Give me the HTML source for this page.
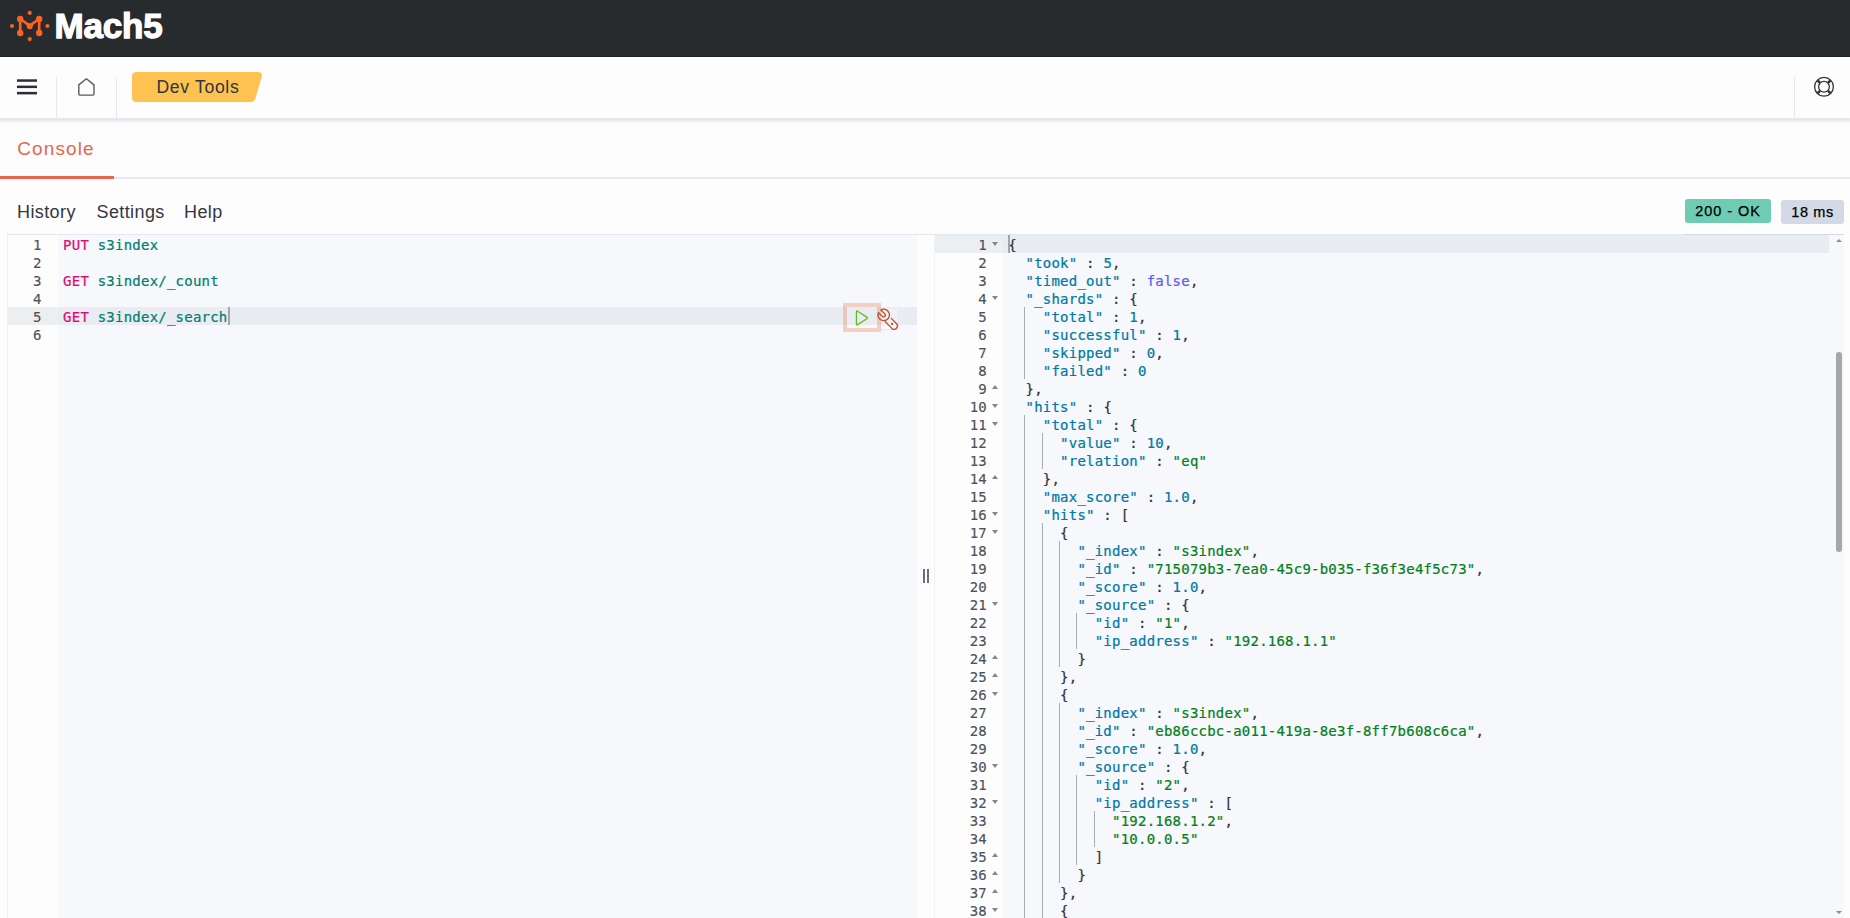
<!DOCTYPE html>
<html lang="en">
<head>
<meta charset="utf-8">
<title>Console - Dev Tools - Mach5</title>
<style>
*{box-sizing:border-box;margin:0;padding:0}
html,body{width:1850px;height:918px;overflow:hidden;background:#fdfdfe;font-family:"Liberation Sans",sans-serif;color:#343741}
.abs{position:absolute}
#top{position:absolute;left:0;top:0;width:1850px;height:57px;background:#282b2e;border-bottom:1px solid #1f2225}
#brand{position:absolute;left:54.5px;top:4px;font-size:35px;line-height:44px;font-weight:700;color:#fff;letter-spacing:-0.2px;white-space:nowrap;-webkit-text-stroke:1.25px #fff}
#nav{position:absolute;left:0;top:57px;width:1850px;height:61px;background:#fdfdfe}
#navshadow{position:absolute;left:0;top:118px;width:1850px;height:7px;background:linear-gradient(#e6e9ee 0,#e3e6ea 28%,#f4f6f8 55%,#fbfcfd 80%,#fdfdfe 100%)}
.vsep{position:absolute;width:1px;background:#e4e9ef;top:77px;height:41px}

#crumbt{position:absolute;left:132px;top:72px;width:130px;height:30px;line-height:30px;font-size:17.6px;letter-spacing:0.68px;color:#2d3540;text-align:left;padding-left:24.4px;white-space:nowrap}
#tab{position:absolute;left:17.3px;top:134px;font-size:19px;line-height:30px;letter-spacing:1.1px;color:#e7664c;white-space:nowrap}
#tabline{position:absolute;left:0;top:177px;width:1850px;height:2px;background:#e3e8ed}
#tabsel{position:absolute;left:0;top:176px;width:114px;height:3px;background:#e7664c}
.menu{position:absolute;top:199px;font-size:18px;line-height:26px;letter-spacing:0.4px;color:#343741;white-space:nowrap}
.badge{position:absolute;height:24px;border-radius:3px;font-size:14.5px;line-height:24px;color:#000;text-align:center;white-space:nowrap;font-weight:400;letter-spacing:0.93px;-webkit-text-stroke:0.25px #000}
/*EDCSS*/
.ln{position:absolute;height:18px;line-height:18px;text-align:right;font-family:"DejaVu Sans Mono","Liberation Mono",monospace;font-size:14px;letter-spacing:0.25px;color:#4e5258;white-space:pre;-webkit-text-stroke-width:0.15px}
.cl{position:absolute;height:18px;line-height:18px;font-family:"DejaVu Sans Mono","Liberation Mono",monospace;font-size:14px;letter-spacing:0.2243px;color:#2f333a;white-space:pre;-webkit-text-stroke-width:0.22px}
.m{color:#dd0a73}.u{color:#017d73}.k{color:#0079a5}.n{color:#0079a5}.s{color:#03801c}.b{color:#585cf6}.p{color:#2f333a}
.ig{position:absolute;width:1px;height:18px;background:#a9acb0}
.fo{position:absolute;width:0;height:0;border-left:3px solid transparent;border-right:3px solid transparent;border-top:4px solid #838587}
.fc{position:absolute;width:0;height:0;border-left:3px solid transparent;border-right:3px solid transparent;border-bottom:4px solid #838587}
/*EDCSSEND*/</style>
</head>
<body>
<div id="top">
<svg class="abs" style="left:0;top:0" width="60" height="56" viewBox="0 0 60 56">
<g fill="#fd6220" stroke="none">
<circle cx="29.75" cy="12.9" r="2.05"/><circle cx="29.75" cy="39.1" r="2.05"/>
<circle cx="12" cy="26" r="2.05"/><circle cx="47.4" cy="26" r="2.05"/>
<circle cx="20.2" cy="19" r="3.2"/><circle cx="39.2" cy="19" r="3.2"/>
<circle cx="20.2" cy="33" r="3.2"/><circle cx="39.2" cy="33" r="3.2"/>
<path d="M25.9 23.2 L33.6 23.2 L32.2 28.4 Q29.75 30 27.3 28.4 Z"/>
</g>
<g fill="none" stroke="#fd6220" stroke-width="2.7" stroke-linecap="round" stroke-linejoin="round">
<path d="M20.2 33 L20.2 19 L29.75 25.6 L39.2 19 L39.2 33"/>
</g>
</svg>
<div id="brand">Mach5</div>
</div>
<div id="nav"></div>
<div id="navshadow"></div>
<div class="vsep" style="left:56px"></div>
<div class="vsep" style="left:116px"></div>
<div class="vsep" style="left:1794px"></div>
<!-- hamburger -->
<svg class="abs" style="left:17px;top:79px" width="20" height="16" viewBox="0 0 20 16"><g fill="#2b2f33"><rect x="0" y="0.3" width="20" height="2.5"/><rect x="0" y="6.6" width="20" height="2.5"/><rect x="0" y="12.9" width="20" height="2.5"/></g></svg>
<!-- home -->
<svg class="abs" style="left:76px;top:76px" width="22" height="22" viewBox="0 0 22 22"><path d="M10.4 2.8 L2.8 8.9 L2.8 18 Q2.8 19.1 3.9 19.1 L16.9 19.1 Q18 19.1 18 18 L18 8.9 Z" fill="none" stroke="#565b60" stroke-width="1.4" stroke-linejoin="round"/></svg>
<svg class="abs" style="left:132px;top:72px" width="131" height="30" viewBox="0 0 131 30"><path d="M4.5 0 L125.6 0 Q131 0 129.7 4.6 L123.5 26.3 Q122.4 30 118.4 30 L4.5 30 Q0 30 0 25.5 L0 4.5 Q0 0 4.5 0 Z" fill="#fec250"/></svg><div id="crumbt">Dev Tools</div>
<!-- help / lifebuoy -->
<svg class="abs" style="left:1812px;top:75px" width="24" height="24" viewBox="0 0 24 24"><g fill="none" stroke="#30353a" stroke-width="1.3"><circle cx="12" cy="11.8" r="9.4"/><circle cx="12" cy="11.8" r="5.4"/></g><g fill="none" stroke="#2b3035" stroke-width="2.5"><path d="M5.6 5.4 L8 7.8 M18.4 5.4 L16 7.8 M5.6 18.2 L8 15.8 M18.4 18.2 L16 15.8"/></g></svg>
<div id="tab">Console</div>
<div id="tabline"></div><div id="tabsel"></div>
<div class="menu" style="left:17px">History</div>
<div class="menu" style="left:96.5px">Settings</div>
<div class="menu" style="left:184px">Help</div>
<div class="badge" style="left:1685px;top:199px;width:86px;background:#6dccb1">200 - OK</div>
<div class="badge" style="left:1781px;top:200px;width:63px;letter-spacing:0.6px;background:#d3dae6">18 ms</div>
<!--EDITORS-->
<div class="abs" style="left:7px;top:234px;width:1837px;height:1px;background:#e4e9ee"></div>
<div class="abs" style="left:1685px;top:234px;width:159px;height:1px;background:#d3d9e5"></div>
<div class="abs" style="left:7px;top:235px;width:1px;height:683px;background:#eef1f4"></div>
<div class="abs" style="left:8px;top:235px;width:50px;height:683px;background:#fdfdfe"></div>
<div class="abs" style="left:58px;top:235px;width:859px;height:683px;background:#f6f8fb"></div>
<div class="abs" style="left:8px;top:307px;width:50px;height:18px;background:#ebeff2"></div>
<div class="abs" style="left:58px;top:307px;width:859px;height:18px;background:#e9edf2"></div>
<div class="ln" style="left:8px;top:236px;width:33.6px">1</div>
<div class="cl" style="left:63.1px;top:236px"><span class="m">PUT</span> <span class="u">s3index</span></div>
<div class="ln" style="left:8px;top:254px;width:33.6px">2</div>
<div class="ln" style="left:8px;top:272px;width:33.6px">3</div>
<div class="cl" style="left:63.1px;top:272px"><span class="m">GET</span> <span class="u">s3index/_count</span></div>
<div class="ln" style="left:8px;top:290px;width:33.6px">4</div>
<div class="ln" style="left:8px;top:308px;width:33.6px">5</div>
<div class="cl" style="left:63.1px;top:308px"><span class="m">GET</span> <span class="u">s3index/_search</span></div>
<div class="ln" style="left:8px;top:326px;width:33.6px">6</div>
<div class="abs" style="left:228px;top:307px;width:2px;height:18px;background:#a2a6aa"></div>
<div class="abs" style="left:934px;top:235px;width:1px;height:683px;background:#f0f2f5"></div>
<div class="abs" style="left:935px;top:235px;width:68px;height:683px;background:#fdfdfe"></div>
<div class="abs" style="left:1003px;top:235px;width:841px;height:683px;background:#f6f8fb"></div>
<div class="abs" style="left:935px;top:235px;width:68px;height:18px;background:#ebeff2"></div>
<div class="abs" style="left:1003px;top:235px;width:826px;height:18px;background:#e9edf2"></div>
<div class="abs" style="left:1008px;top:235px;width:2px;height:18px;background:#a2a6aa"></div>
<div class="ln" style="left:935px;top:236px;width:52px">1</div>
<div class="fo" style="left:992px;top:242px"></div>
<div class="cl" style="left:1008.20px;top:236px"><span class="p">{</span></div>
<div class="ln" style="left:935px;top:254px;width:52px">2</div>
<div class="cl" style="left:1025.51px;top:254px"><span class="k">"took"</span><span class="p"> : </span><span class="n">5</span><span class="p">,</span></div>
<div class="ln" style="left:935px;top:272px;width:52px">3</div>
<div class="cl" style="left:1025.51px;top:272px"><span class="k">"timed_out"</span><span class="p"> : </span><span class="b">false</span><span class="p">,</span></div>
<div class="ln" style="left:935px;top:290px;width:52px">4</div>
<div class="fo" style="left:992px;top:296px"></div>
<div class="cl" style="left:1025.51px;top:290px"><span class="k">"_shards"</span><span class="p"> : {</span></div>
<div class="ln" style="left:935px;top:308px;width:52px">5</div>
<div class="cl" style="left:1042.81px;top:308px"><span class="k">"total"</span><span class="p"> : </span><span class="n">1</span><span class="p">,</span></div>
<div class="ig" style="left:1024px;top:307px"></div>
<div class="ln" style="left:935px;top:326px;width:52px">6</div>
<div class="cl" style="left:1042.81px;top:326px"><span class="k">"successful"</span><span class="p"> : </span><span class="n">1</span><span class="p">,</span></div>
<div class="ig" style="left:1024px;top:325px"></div>
<div class="ln" style="left:935px;top:344px;width:52px">7</div>
<div class="cl" style="left:1042.81px;top:344px"><span class="k">"skipped"</span><span class="p"> : </span><span class="n">0</span><span class="p">,</span></div>
<div class="ig" style="left:1024px;top:343px"></div>
<div class="ln" style="left:935px;top:362px;width:52px">8</div>
<div class="cl" style="left:1042.81px;top:362px"><span class="k">"failed"</span><span class="p"> : </span><span class="n">0</span></div>
<div class="ig" style="left:1024px;top:361px"></div>
<div class="ln" style="left:935px;top:380px;width:52px">9</div>
<div class="fc" style="left:992px;top:385px"></div>
<div class="cl" style="left:1025.51px;top:380px"><span class="p">},</span></div>
<div class="ln" style="left:935px;top:398px;width:52px">10</div>
<div class="fo" style="left:992px;top:404px"></div>
<div class="cl" style="left:1025.51px;top:398px"><span class="k">"hits"</span><span class="p"> : {</span></div>
<div class="ln" style="left:935px;top:416px;width:52px">11</div>
<div class="fo" style="left:992px;top:422px"></div>
<div class="cl" style="left:1042.81px;top:416px"><span class="k">"total"</span><span class="p"> : {</span></div>
<div class="ig" style="left:1024px;top:415px"></div>
<div class="ln" style="left:935px;top:434px;width:52px">12</div>
<div class="cl" style="left:1060.12px;top:434px"><span class="k">"value"</span><span class="p"> : </span><span class="n">10</span><span class="p">,</span></div>
<div class="ig" style="left:1024px;top:433px"></div>
<div class="ig" style="left:1042px;top:433px"></div>
<div class="ln" style="left:935px;top:452px;width:52px">13</div>
<div class="cl" style="left:1060.12px;top:452px"><span class="k">"relation"</span><span class="p"> : </span><span class="s">"eq"</span></div>
<div class="ig" style="left:1024px;top:451px"></div>
<div class="ig" style="left:1042px;top:451px"></div>
<div class="ln" style="left:935px;top:470px;width:52px">14</div>
<div class="fc" style="left:992px;top:475px"></div>
<div class="cl" style="left:1042.81px;top:470px"><span class="p">},</span></div>
<div class="ig" style="left:1024px;top:469px"></div>
<div class="ln" style="left:935px;top:488px;width:52px">15</div>
<div class="cl" style="left:1042.81px;top:488px"><span class="k">"max_score"</span><span class="p"> : </span><span class="n">1.0</span><span class="p">,</span></div>
<div class="ig" style="left:1024px;top:487px"></div>
<div class="ln" style="left:935px;top:506px;width:52px">16</div>
<div class="fo" style="left:992px;top:512px"></div>
<div class="cl" style="left:1042.81px;top:506px"><span class="k">"hits"</span><span class="p"> : [</span></div>
<div class="ig" style="left:1024px;top:505px"></div>
<div class="ln" style="left:935px;top:524px;width:52px">17</div>
<div class="fo" style="left:992px;top:530px"></div>
<div class="cl" style="left:1060.12px;top:524px"><span class="p">{</span></div>
<div class="ig" style="left:1024px;top:523px"></div>
<div class="ig" style="left:1042px;top:523px"></div>
<div class="ln" style="left:935px;top:542px;width:52px">18</div>
<div class="cl" style="left:1077.42px;top:542px"><span class="k">"_index"</span><span class="p"> : </span><span class="s">"s3index"</span><span class="p">,</span></div>
<div class="ig" style="left:1024px;top:541px"></div>
<div class="ig" style="left:1042px;top:541px"></div>
<div class="ig" style="left:1059px;top:541px"></div>
<div class="ln" style="left:935px;top:560px;width:52px">19</div>
<div class="cl" style="left:1077.42px;top:560px"><span class="k">"_id"</span><span class="p"> : </span><span class="s">"715079b3-7ea0-45c9-b035-f36f3e4f5c73"</span><span class="p">,</span></div>
<div class="ig" style="left:1024px;top:559px"></div>
<div class="ig" style="left:1042px;top:559px"></div>
<div class="ig" style="left:1059px;top:559px"></div>
<div class="ln" style="left:935px;top:578px;width:52px">20</div>
<div class="cl" style="left:1077.42px;top:578px"><span class="k">"_score"</span><span class="p"> : </span><span class="n">1.0</span><span class="p">,</span></div>
<div class="ig" style="left:1024px;top:577px"></div>
<div class="ig" style="left:1042px;top:577px"></div>
<div class="ig" style="left:1059px;top:577px"></div>
<div class="ln" style="left:935px;top:596px;width:52px">21</div>
<div class="fo" style="left:992px;top:602px"></div>
<div class="cl" style="left:1077.42px;top:596px"><span class="k">"_source"</span><span class="p"> : {</span></div>
<div class="ig" style="left:1024px;top:595px"></div>
<div class="ig" style="left:1042px;top:595px"></div>
<div class="ig" style="left:1059px;top:595px"></div>
<div class="ln" style="left:935px;top:614px;width:52px">22</div>
<div class="cl" style="left:1094.73px;top:614px"><span class="k">"id"</span><span class="p"> : </span><span class="s">"1"</span><span class="p">,</span></div>
<div class="ig" style="left:1024px;top:613px"></div>
<div class="ig" style="left:1042px;top:613px"></div>
<div class="ig" style="left:1059px;top:613px"></div>
<div class="ig" style="left:1076px;top:613px"></div>
<div class="ln" style="left:935px;top:632px;width:52px">23</div>
<div class="cl" style="left:1094.73px;top:632px"><span class="k">"ip_address"</span><span class="p"> : </span><span class="s">"192.168.1.1"</span></div>
<div class="ig" style="left:1024px;top:631px"></div>
<div class="ig" style="left:1042px;top:631px"></div>
<div class="ig" style="left:1059px;top:631px"></div>
<div class="ig" style="left:1076px;top:631px"></div>
<div class="ln" style="left:935px;top:650px;width:52px">24</div>
<div class="fc" style="left:992px;top:655px"></div>
<div class="cl" style="left:1077.42px;top:650px"><span class="p">}</span></div>
<div class="ig" style="left:1024px;top:649px"></div>
<div class="ig" style="left:1042px;top:649px"></div>
<div class="ig" style="left:1059px;top:649px"></div>
<div class="ln" style="left:935px;top:668px;width:52px">25</div>
<div class="fc" style="left:992px;top:673px"></div>
<div class="cl" style="left:1060.12px;top:668px"><span class="p">},</span></div>
<div class="ig" style="left:1024px;top:667px"></div>
<div class="ig" style="left:1042px;top:667px"></div>
<div class="ln" style="left:935px;top:686px;width:52px">26</div>
<div class="fo" style="left:992px;top:692px"></div>
<div class="cl" style="left:1060.12px;top:686px"><span class="p">{</span></div>
<div class="ig" style="left:1024px;top:685px"></div>
<div class="ig" style="left:1042px;top:685px"></div>
<div class="ln" style="left:935px;top:704px;width:52px">27</div>
<div class="cl" style="left:1077.42px;top:704px"><span class="k">"_index"</span><span class="p"> : </span><span class="s">"s3index"</span><span class="p">,</span></div>
<div class="ig" style="left:1024px;top:703px"></div>
<div class="ig" style="left:1042px;top:703px"></div>
<div class="ig" style="left:1059px;top:703px"></div>
<div class="ln" style="left:935px;top:722px;width:52px">28</div>
<div class="cl" style="left:1077.42px;top:722px"><span class="k">"_id"</span><span class="p"> : </span><span class="s">"eb86ccbc-a011-419a-8e3f-8ff7b608c6ca"</span><span class="p">,</span></div>
<div class="ig" style="left:1024px;top:721px"></div>
<div class="ig" style="left:1042px;top:721px"></div>
<div class="ig" style="left:1059px;top:721px"></div>
<div class="ln" style="left:935px;top:740px;width:52px">29</div>
<div class="cl" style="left:1077.42px;top:740px"><span class="k">"_score"</span><span class="p"> : </span><span class="n">1.0</span><span class="p">,</span></div>
<div class="ig" style="left:1024px;top:739px"></div>
<div class="ig" style="left:1042px;top:739px"></div>
<div class="ig" style="left:1059px;top:739px"></div>
<div class="ln" style="left:935px;top:758px;width:52px">30</div>
<div class="fo" style="left:992px;top:764px"></div>
<div class="cl" style="left:1077.42px;top:758px"><span class="k">"_source"</span><span class="p"> : {</span></div>
<div class="ig" style="left:1024px;top:757px"></div>
<div class="ig" style="left:1042px;top:757px"></div>
<div class="ig" style="left:1059px;top:757px"></div>
<div class="ln" style="left:935px;top:776px;width:52px">31</div>
<div class="cl" style="left:1094.73px;top:776px"><span class="k">"id"</span><span class="p"> : </span><span class="s">"2"</span><span class="p">,</span></div>
<div class="ig" style="left:1024px;top:775px"></div>
<div class="ig" style="left:1042px;top:775px"></div>
<div class="ig" style="left:1059px;top:775px"></div>
<div class="ig" style="left:1076px;top:775px"></div>
<div class="ln" style="left:935px;top:794px;width:52px">32</div>
<div class="fo" style="left:992px;top:800px"></div>
<div class="cl" style="left:1094.73px;top:794px"><span class="k">"ip_address"</span><span class="p"> : [</span></div>
<div class="ig" style="left:1024px;top:793px"></div>
<div class="ig" style="left:1042px;top:793px"></div>
<div class="ig" style="left:1059px;top:793px"></div>
<div class="ig" style="left:1076px;top:793px"></div>
<div class="ln" style="left:935px;top:812px;width:52px">33</div>
<div class="cl" style="left:1112.04px;top:812px"><span class="s">"192.168.1.2"</span><span class="p">,</span></div>
<div class="ig" style="left:1024px;top:811px"></div>
<div class="ig" style="left:1042px;top:811px"></div>
<div class="ig" style="left:1059px;top:811px"></div>
<div class="ig" style="left:1076px;top:811px"></div>
<div class="ig" style="left:1094px;top:811px"></div>
<div class="ln" style="left:935px;top:830px;width:52px">34</div>
<div class="cl" style="left:1112.04px;top:830px"><span class="s">"10.0.0.5"</span></div>
<div class="ig" style="left:1024px;top:829px"></div>
<div class="ig" style="left:1042px;top:829px"></div>
<div class="ig" style="left:1059px;top:829px"></div>
<div class="ig" style="left:1076px;top:829px"></div>
<div class="ig" style="left:1094px;top:829px"></div>
<div class="ln" style="left:935px;top:848px;width:52px">35</div>
<div class="fc" style="left:992px;top:853px"></div>
<div class="cl" style="left:1094.73px;top:848px"><span class="p">]</span></div>
<div class="ig" style="left:1024px;top:847px"></div>
<div class="ig" style="left:1042px;top:847px"></div>
<div class="ig" style="left:1059px;top:847px"></div>
<div class="ig" style="left:1076px;top:847px"></div>
<div class="ln" style="left:935px;top:866px;width:52px">36</div>
<div class="fc" style="left:992px;top:871px"></div>
<div class="cl" style="left:1077.42px;top:866px"><span class="p">}</span></div>
<div class="ig" style="left:1024px;top:865px"></div>
<div class="ig" style="left:1042px;top:865px"></div>
<div class="ig" style="left:1059px;top:865px"></div>
<div class="ln" style="left:935px;top:884px;width:52px">37</div>
<div class="fc" style="left:992px;top:889px"></div>
<div class="cl" style="left:1060.12px;top:884px"><span class="p">},</span></div>
<div class="ig" style="left:1024px;top:883px"></div>
<div class="ig" style="left:1042px;top:883px"></div>
<div class="ln" style="left:935px;top:902px;width:52px">38</div>
<div class="fo" style="left:992px;top:908px"></div>
<div class="cl" style="left:1060.12px;top:902px"><span class="p">{</span></div>
<div class="ig" style="left:1024px;top:901px"></div>
<div class="ig" style="left:1042px;top:901px"></div>
<div class="abs" style="left:1836px;top:352px;width:6px;height:200px;border-radius:3px;background:#a4a8a9"></div>
<div class="abs" style="left:1836px;top:239px;width:0;height:0;border-left:3px solid transparent;border-right:3px solid transparent;border-bottom:3px solid #8a8d90"></div>
<div class="abs" style="left:1836px;top:911px;width:0;height:0;border-left:3px solid transparent;border-right:3px solid transparent;border-top:3px solid #8a8d90"></div>
<div class="abs" style="left:923px;top:569px;width:2px;height:14px;background:#6a6f73"></div>
<div class="abs" style="left:927px;top:569px;width:2px;height:14px;background:#6a6f73"></div>
<div class="abs" style="left:843px;top:303px;width:38px;height:29px;border:4px solid rgba(233,111,64,0.3)"></div>
<div class="abs" style="left:847px;top:325px;width:30px;height:3px;background:#f9fafc"></div>
<svg class="abs" style="left:853px;top:309px" width="18" height="18" viewBox="0 0 18 18"><path d="M3.45 2.9 Q3.45 1.5 4.6 2.2 L13.9 8.1 Q14.9 8.9 13.9 9.7 L4.6 15.65 Q3.45 16.3 3.45 15 Z" fill="none" stroke="#66b821" stroke-width="1.3" stroke-linejoin="round"/></svg>
<div class="abs" style="left:881px;top:309px;width:17px;height:20px;background:rgba(255,255,255,0.28);box-shadow:0 1px 1px rgba(60,70,90,0.08)"></div>
<svg class="abs" style="left:876px;top:308px" width="24" height="24" viewBox="0 0 24 24"><g fill="none" stroke="#bd4f2c" stroke-width="1.3" stroke-linecap="round" stroke-linejoin="round"><path d="M4.8 2.05 A5.7 5.7 0 1 1 2.5 4.66 L6.46 8.4 A1.73 1.73 0 0 0 8.75 5.8 Z"/><path d="M15.3 10.4 L20.6 15.7 A3.33 3.33 0 0 1 15.9 20.4 L9.3 13.8"/></g><circle cx="16.1" cy="16" r="1.15" fill="#bd4f2c"/></svg>
<!--EDITORSEND-->
</body>
</html>
